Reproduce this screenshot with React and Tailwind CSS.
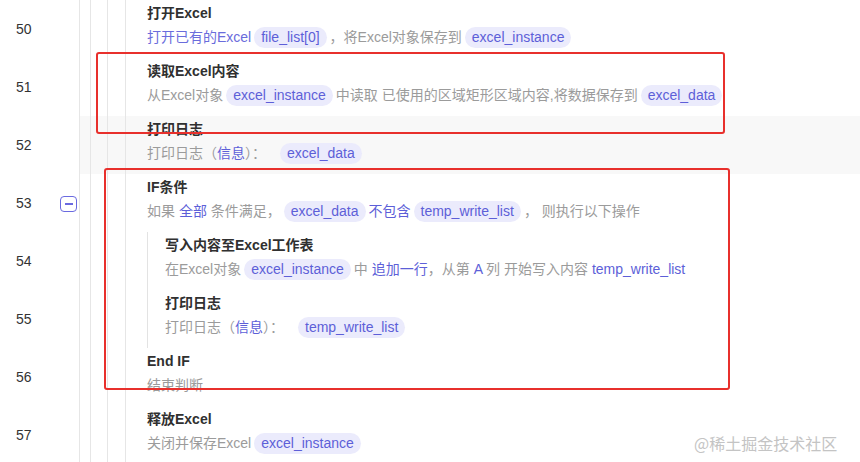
import React from 'react';

const font = { fontFamily: '"Liberation Sans", "Noto Sans CJK SC", sans-serif' };

const Chip = ({ children }) => (
    <span className="inline-flex items-center h-[21px] px-[7px] mx-[3px] rounded-full bg-[#ebebfc] text-[#5d5fd8]">
        {children}
    </span>
);

const Blue = ({ children }) => <span className="text-[#5d5fd8]">{children}</span>;

const rows = [
    {
        n: 50,
        title: '打开Excel',
        desc: (
            <>
                <span className="text-[#6a6cdc]">打开已有的Excel</span>
                <Chip>file_list[0]</Chip>
                <span>，将Excel对象保存到</span>
                <Chip>excel_instance</Chip>
            </>
        ),
    },
    {
        n: 51,
        title: '读取Excel内容',
        desc: (
            <>
                <span>从Excel对象</span>
                <Chip>excel_instance</Chip>
                <span>中读取 已使用的区域矩形区域内容,将数据保存到</span>
                <Chip>excel_data</Chip>
            </>
        ),
    },
    {
        n: 52,
        title: '打印日志',
        hover: true,
        desc: (
            <>
                <span>打印日志（<Blue>信息</Blue>）：</span>
                <span className="w-[11px]" />
                <Chip>excel_data</Chip>
            </>
        ),
    },
    {
        n: 53,
        title: 'IF条件',
        toggle: true,
        desc: (
            <>
                <span>如果 <Blue>全部</Blue> 条件满足，</span>
                <Chip>excel_data</Chip>
                <Blue>不包含</Blue>
                <Chip>temp_write_list</Chip>
                <span>，&nbsp;则执行以下操作</span>
            </>
        ),
    },
    {
        n: 54,
        title: '写入内容至Excel工作表',
        nested: true,
        desc: (
            <>
                <span>在Excel对象</span>
                <Chip>excel_instance</Chip>
                <span>中 <Blue>追加一行</Blue>，从第 <Blue>A</Blue> 列 开始写入内容 <Blue>temp_write_list</Blue></span>
            </>
        ),
    },
    {
        n: 55,
        title: '打印日志',
        nested: true,
        desc: (
            <>
                <span>打印日志（<Blue>信息</Blue>）：</span>
                <span className="w-[11px]" />
                <Chip>temp_write_list</Chip>
            </>
        ),
    },
    {
        n: 56,
        title: 'End IF',
        desc: <span>结束判断</span>,
    },
    {
        n: 57,
        title: '释放Excel',
        desc: (
            <>
                <span>关闭并保存Excel</span>
                <Chip>excel_instance</Chip>
            </>
        ),
    },
];

const Row = ({ row }) => (
    <div className={`flex h-[58px] ${row.hover ? 'bg-[#f8f8f8]' : 'bg-white'}`}>
        {/* gutter */}
        <div className="w-[80px] shrink-0 flex items-center pl-[16px] pr-[2px] border-r border-[#e6e6e6] bg-white">
            <span className="flex-1 pt-[1px] text-[14px] text-[#333]">{row.n}</span>
            {row.toggle && (
                <span className="w-[17px] h-[16px] mt-[2px] rounded-[4px] border-[1.5px] border-[#6a6ae0] flex items-center justify-center">
                    <span className="w-[8px] h-[1.5px] bg-[#6a6ae0]" />
                </span>
            )}
        </div>
        {/* nesting guides */}
        <div className="w-[10px] shrink-0" />
        <div className="w-[17px] shrink-0 border-l border-[#e6e6e6]" />
        <div className="w-[18px] shrink-0 border-l border-[#e6e6e6]" />
        <div className="flex-1 flex border-l border-[#e6e6e6] pl-[21px]">
            {row.nested && <div className="w-[18px] shrink-0 border-l border-[#e3e3e3]" />}
            <div className="pt-[4px]">
                <div className="text-[14px] leading-[18px] font-bold text-[#303030]">{row.title}</div>
                <div className="mt-[3px] h-[24px] flex items-center whitespace-nowrap text-[14px] text-[#9b9b9b]">
                    {row.desc}
                </div>
            </div>
        </div>
    </div>
);

const App = () => {
    return (
        <div className="relative w-[860px] h-[462px] overflow-hidden bg-white" style={font}>
            {rows.map((r) => (
                <Row key={r.n} row={r} />
            ))}

            {/* highlight boxes */}
            <div className="absolute left-[96px] top-[52px] w-[629px] h-[82px] border-2 border-[#e8302c] rounded-[3px]" />
            <div className="absolute left-[104px] top-[168px] w-[626px] h-[222px] border-2 border-[#e8302c] rounded-[3px]" />

            {/* watermark */}
            <div className="absolute left-[694px] top-[431px] text-[16px] text-[#c4c4c4]" style={{ fontFamily: '"Noto Sans CJK SC", sans-serif' }}>
                @稀土掘金技术社区
            </div>
        </div>
    );
};

export default App;
